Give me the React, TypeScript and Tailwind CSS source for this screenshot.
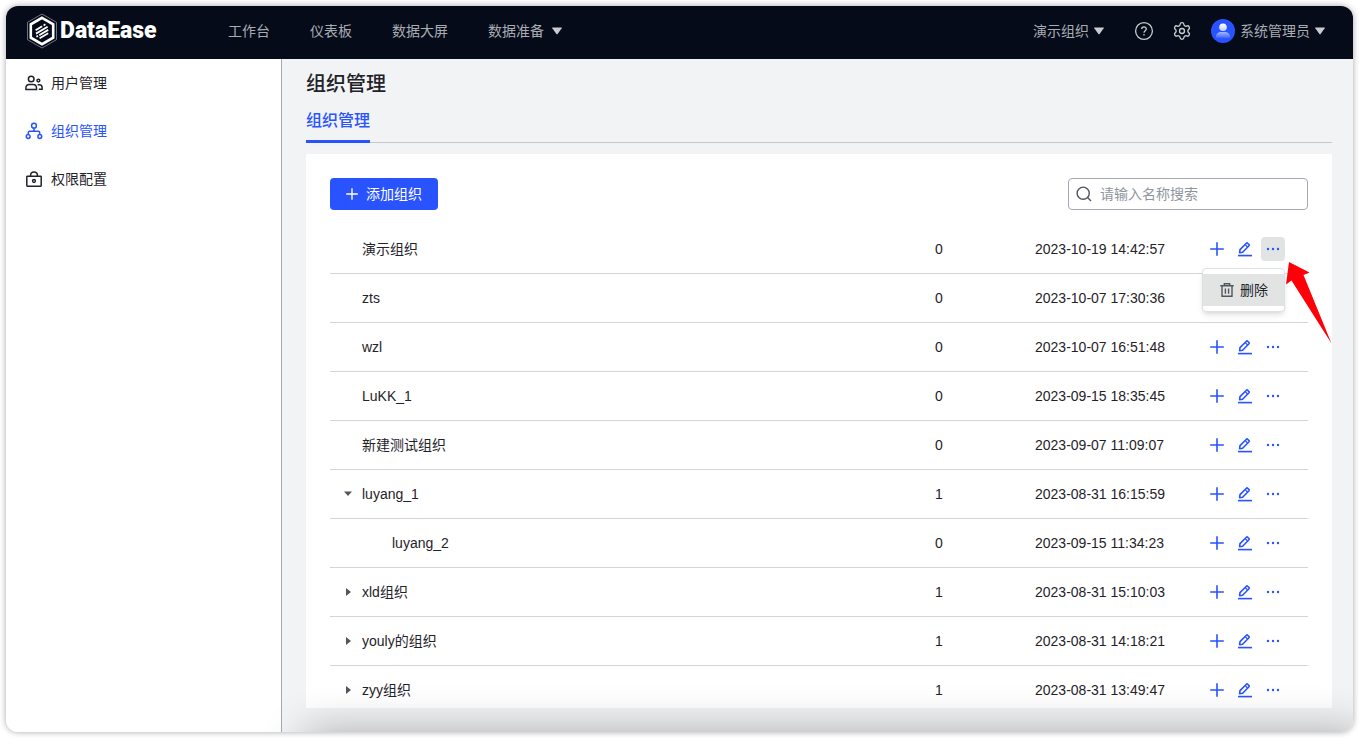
import { useState } from "react";
import { Settings } from "lucide-react";

type Org = {
  name: string;
  count: number;
  created: string;
  state?: "open" | "closed";
  child?: boolean;
};

const orgs: Org[] = [
  { name: "演示组织", count: 0, created: "2023-10-19 14:42:57" },
  { name: "zts", count: 0, created: "2023-10-07 17:30:36" },
  { name: "wzl", count: 0, created: "2023-10-07 16:51:48" },
  { name: "LuKK_1", count: 0, created: "2023-09-15 18:35:45" },
  { name: "新建测试组织", count: 0, created: "2023-09-07 11:09:07" },
  { name: "luyang_1", count: 1, created: "2023-08-31 16:15:59", state: "open" },
  { name: "luyang_2", count: 0, created: "2023-09-15 11:34:23", child: true },
  { name: "xld组织", count: 1, created: "2023-08-31 15:10:03", state: "closed" },
  { name: "youly的组织", count: 1, created: "2023-08-31 14:18:21", state: "closed" },
  { name: "zyy组织", count: 1, created: "2023-08-31 13:49:47", state: "closed" },
];

function Logo() {
  return (
    <svg width="32" height="36" viewBox="0 0 32 36" fill="none">
      <path d="M16 1 L30.5 9.3 V26.7 L16 35 L1.5 26.7 V9.3 Z" stroke="#8b8f98" strokeWidth="0.8" />
      <path d="M16 4.8 L27.2 11.3 V24.7 L16 31.2 L4.8 24.7 V11.3 Z" stroke="#fff" strokeWidth="2.6" />
      <g stroke="#fff" strokeWidth="1.8">
        <path d="M9.6 17.2 L16.2 13.2" />
        <path d="M17.6 12.4 L19.4 11.3" />
        <path d="M10 20.6 L21.6 13.8" />
        <path d="M10.4 23.8 L12 22.9" />
        <path d="M13.2 22.2 L22.2 16.9" />
        <path d="M13.6 25.2 L22.2 20.2" />
      </g>
    </svg>
  );
}

function Caret() {
  return (
    <svg width="10" height="8" viewBox="0 0 10 8" fill="#c9cbcf">
      <path d="M0.5 0.5 H9.5 Q10 0.8 9.7 1.3 L5.6 7 Q5 7.6 4.4 7 L0.3 1.3 Q0 0.8 0.5 0.5Z" />
    </svg>
  );
}

function HelpIcon() {
  return (
    <svg width="20" height="20" viewBox="0 0 20 20" fill="none" stroke="#c9cbcf" strokeWidth="1.3">
      <circle cx="10" cy="10" r="8.4" />
      <path d="M7.7 8.1 C7.7 5.2 12.3 5.2 12.3 8 C12.3 9.7 10 9.8 10 11.8" />
      <path d="M10 13 V14.4" />
    </svg>
  );
}

function Avatar() {
  return (
    <svg width="24" height="24" viewBox="0 0 24 24">
      <defs>
        <linearGradient id="head" x1="0" y1="0" x2="0" y2="1">
          <stop offset="0" stopColor="#fff" />
          <stop offset="1" stopColor="#c3d0ff" />
        </linearGradient>
        <linearGradient id="body" x1="0" y1="0" x2="0" y2="1">
          <stop offset="0" stopColor="#a5b9ff" />
          <stop offset="1" stopColor="#3a64ff" />
        </linearGradient>
      </defs>
      <circle cx="12" cy="12" r="12" fill="#2853ff" />
      <circle cx="12" cy="8.2" r="3.8" fill="url(#head)" />
      <path d="M5 19 V17.6 C5 14.8 7.4 13 10 13 H14 C16.6 13 19 14.8 19 17.6 V19 Z" fill="url(#body)" />
    </svg>
  );
}

function UsersIcon() {
  return (
    <svg width="18" height="18" viewBox="0 0 18 18" fill="none" stroke="currentColor" strokeWidth="1.5">
      <circle cx="6.2" cy="5" r="2.8" />
      <path d="M0.9 15.4 V14 C0.9 11.8 2.4 10.4 4.4 10.4 H8 C10 10.4 11.5 11.8 11.5 14 V15.4 Z" />
      <circle cx="13.4" cy="6.6" r="1.4" />
      <path d="M12.6 10.8 H14.4 C16 10.8 17.1 12 17.1 13.6 V15.3 H13.8" />
    </svg>
  );
}

function OrgIcon() {
  return (
    <svg width="18" height="18" viewBox="0 0 18 18" fill="none" stroke="currentColor" strokeWidth="1.5">
      <circle cx="9" cy="3.7" r="2.4" />
      <circle cx="3.2" cy="14.5" r="1.9" />
      <circle cx="14.8" cy="14.5" r="1.9" />
      <path d="M9 6.1 V9.3 M3.3 12.6 V10.8 Q3.3 9.3 4.8 9.3 H13.2 Q14.7 9.3 14.7 10.8 V12.6" />
    </svg>
  );
}

function LockIcon() {
  return (
    <svg width="18" height="18" viewBox="0 0 18 18" fill="none" stroke="currentColor" strokeWidth="1.5">
      <rect x="1.8" y="6.2" width="14.4" height="10" rx="0.6" />
      <path d="M5.5 6 C5.5 0.8 12.5 0.8 12.5 6" />
      <circle cx="9" cy="11" r="1.4" />
    </svg>
  );
}

function PlusIcon({ size }: { size: number }) {
  return (
    <svg width={size} height={size} viewBox="0 0 14 14" fill="none" stroke="currentColor" strokeWidth="1.6">
      <path d="M7 0.2 V13.8 M0.2 7 H13.8" />
    </svg>
  );
}

function EditIcon() {
  return (
    <svg width="16" height="16" viewBox="0 0 16 16" fill="none" stroke="currentColor" strokeWidth="1.6" strokeLinejoin="round">
      <path d="M2.6 11.6 L3 8.6 L9.4 2.2 Q10 1.7 10.6 2.2 L12 3.6 Q12.5 4.2 12 4.8 L5.6 11.2 Z" />
      <path d="M8.2 3.6 L10.6 6" strokeWidth="1.2" />
      <path d="M1 14.6 H15" />
    </svg>
  );
}

function MoreIcon() {
  return (
    <svg width="14" height="4" viewBox="0 0 14 4" fill="currentColor">
      <circle cx="2" cy="2" r="1.2" />
      <circle cx="7" cy="2" r="1.2" />
      <circle cx="12" cy="2" r="1.2" />
    </svg>
  );
}

function TrashIcon() {
  return (
    <svg width="14" height="14" viewBox="0 0 14 14" fill="none" stroke="#51565f" strokeWidth="1.4">
      <path d="M0.3 2.8 H13.7 M4.3 2.6 V0.8 H9.7 V2.6" />
      <path d="M2 3 V13.2 H12 V3 M5.4 5.4 V10.8 M8.6 5.4 V10.8" />
    </svg>
  );
}

function SearchIcon() {
  return (
    <svg width="16" height="16" viewBox="0 0 16 16" fill="none" stroke="#51565f" strokeWidth="1.4">
      <circle cx="7.2" cy="7.2" r="6.1" />
      <path d="M11.6 11.6 L15 15" />
    </svg>
  );
}

const sideItems = [
  { label: "用户管理", icon: <UsersIcon />, active: false },
  { label: "组织管理", icon: <OrgIcon />, active: true },
  { label: "权限配置", icon: <LockIcon />, active: false },
];

function Header() {
  return (
    <header className="flex h-[53px] shrink-0 items-center justify-between bg-[#050b18] pr-7 pb-1 pl-5 text-sm text-[#a9acb3]">
      <div className="flex items-center">
        <a href="#" className="flex w-[202px] items-center gap-[2px]">
          <Logo />
          <span className="font-[Roboto] text-[23px] leading-7 font-black text-white">DataEase</span>
        </a>
        <nav className="flex items-center gap-10">
          <a href="#">工作台</a>
          <a href="#">仪表板</a>
          <a href="#">数据大屏</a>
          <button className="flex items-center gap-2">
            数据准备
            <Caret />
          </button>
        </nav>
      </div>
      <div className="flex items-center">
        <button className="flex items-center gap-[5px]">
          演示组织
          <Caret />
        </button>
        <button className="ml-[30px]" aria-label="帮助">
          <HelpIcon />
        </button>
        <button className="ml-[18px]" aria-label="设置">
          <Settings size={20} strokeWidth={1.6} color="#c9cbcf" />
        </button>
        <button className="ml-[19px] flex items-center gap-[5px]">
          <Avatar />
          系统管理员
          <Caret />
        </button>
      </div>
    </header>
  );
}

function Sidebar() {
  return (
    <aside className="w-[276px] shrink-0 border-r border-[#a6a9b3] bg-white">
      {sideItems.map((item) => (
        <a
          key={item.label}
          href="#"
          className={`flex h-12 items-center gap-2 pl-[19px] text-sm ${
            item.active ? "text-[#2853ff]" : "text-[#1f2329]"
          }`}
        >
          {item.icon}
          {item.label}
        </a>
      ))}
    </aside>
  );
}

// opened "more" menu, with the red pointer beside it
function MoreMenu() {
  return (
    <>
      <div className="absolute top-[31px] right-0 z-10 w-[83px] rounded border border-[#dee0e3] bg-white py-[5px] shadow-md">
        <button className="flex h-8 w-full items-center gap-[6px] bg-[#e2e4e3] pl-[17px] text-[#1f2329]">
          <TrashIcon />
          删除
        </button>
      </div>
      <svg className="absolute top-[25px] left-[25px] z-20" width="46" height="82" viewBox="0 0 46 82" fill="#ff0009">
        <path d="M3 0 L23.5 10.5 L17.5 13 L45.5 81.5 L5.5 18.5 L0 22.5 Z" />
      </svg>
    </>
  );
}

function OrgRow({ org, menuOpen, onToggle }: { org: Org; menuOpen: boolean; onToggle: () => void }) {
  return (
    <tr className="h-[49px] *:border-b *:border-[#d2d4d6]">
      <td>
        <div className={`flex items-center ${org.child ? "pl-[62px]" : "pl-3"}`}>
          {!org.child && (
            <span className="flex w-5 pl-[2px]">
              {org.state && (
                <button aria-label={org.state === "open" ? "收起" : "展开"}>
                  <svg width="8" height="8" viewBox="0 0 8 8" fill="#51565f">
                    {org.state === "open" ? <path d="M0 1.6 H8 L4 6 Z" /> : <path d="M2 0 V8 L7 4 Z" />}
                  </svg>
                </button>
              )}
            </span>
          )}
          {org.name}
        </div>
      </td>
      <td className="pl-3">{org.count}</td>
      <td className="pl-3">{org.created}</td>
      <td className="pl-3">
        <div className="flex gap-1 text-[#2853ff]">
          <button className="flex size-6 items-center justify-center" aria-label="添加">
            <PlusIcon size={14} />
          </button>
          <button className="flex size-6 items-center justify-center" aria-label="编辑">
            <EditIcon />
          </button>
          <div className="relative">
            <button
              className={`flex size-6 items-center justify-center rounded ${menuOpen ? "bg-[#e2e4e3]" : ""}`}
              aria-label="更多"
              onClick={onToggle}
            >
              <MoreIcon />
            </button>
            {menuOpen && <MoreMenu />}
          </div>
        </div>
      </td>
    </tr>
  );
}

export default function App() {
  const [openMenu, setOpenMenu] = useState<string | null>("演示组织");

  return (
    <div className="h-screen bg-white p-[6px] font-['Liberation_Sans','Noto_Sans_CJK_SC',sans-serif] text-[#1f2329]">
      <div className="relative flex h-full flex-col overflow-hidden rounded-xl shadow-[0_0_6px_rgba(0,0,0,0.35)]">
        <Header />
        <div className="flex min-h-0 flex-1">
          <Sidebar />
          <main className="flex min-w-0 flex-1 flex-col bg-[#f2f3f5] pt-[9px] pr-[21px] pb-6 pl-6">
            <h1 className="text-xl leading-8 font-medium">组织管理</h1>
            <div className="mb-[11px] flex h-[43px] shrink-0 border-b border-[#c6c8cc]">
              <button className="-mb-px border-b-3 border-[#2853ff] pt-[2px] text-base font-medium text-[#2853ff]">
                组织管理
              </button>
            </div>
            <section className="flex min-h-0 flex-1 flex-col bg-white px-6 pt-6 pb-[10px]">
              <div className="mb-[15px] flex shrink-0 items-center justify-between">
                <button className="flex h-8 w-[108px] items-center justify-center gap-2 rounded-sm bg-[#2853ff] text-sm text-white">
                  <PlusIcon size={12} />
                  添加组织
                </button>
                <label className="flex h-8 w-60 items-center gap-2 rounded border border-[#a6a9b3] px-[7px]">
                  <SearchIcon />
                  <input
                    className="min-w-0 flex-1 text-sm outline-none placeholder:text-[#8f959e]"
                    placeholder="请输入名称搜索"
                    aria-label="请输入名称搜索"
                  />
                </label>
              </div>
              <div className="min-h-0 flex-1 overflow-y-clip">
                <table className="w-full table-fixed border-separate border-spacing-0 text-left text-sm">
                  <colgroup>
                    <col />
                    <col className="w-[100px]" />
                    <col className="w-[170px]" />
                    <col className="w-[115px]" />
                  </colgroup>
                  <tbody>
                    {orgs.map((org) => (
                      <OrgRow
                        key={org.name}
                        org={org}
                        menuOpen={openMenu === org.name}
                        onToggle={() => setOpenMenu(openMenu === org.name ? null : org.name)}
                      />
                    ))}
                  </tbody>
                </table>
              </div>
            </section>
          </main>
        </div>
        <div className="pointer-events-none absolute top-full -right-3 left-[300px] h-12 shadow-[0_0_44px_rgba(0,0,0,0.3)]" />
      </div>
    </div>
  );
}
